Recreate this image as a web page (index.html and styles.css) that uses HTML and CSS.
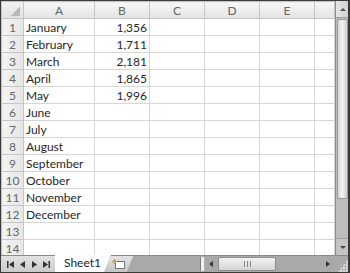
FILE: index.html
```html
<!DOCTYPE html>
<html lang="en">
<head>
    <meta charset="UTF-8">
    <title>Book1</title>
    <link rel="stylesheet" href="styles.css">
</head>
<body>
    <div class="workbook">
        <div class="sheet-area">
            <table class="grid">
                <colgroup>
                    <col class="col-row">
                    <col class="col-a">
                    <col class="col-std">
                    <col class="col-std">
                    <col class="col-std">
                    <col class="col-std">
                    <col>
                </colgroup>
                <thead>
                    <tr>
                        <th class="corner"></th>
                        <th>A</th>
                        <th>B</th>
                        <th>C</th>
                        <th>D</th>
                        <th>E</th>
                        <th></th>
                    </tr>
                </thead>
                <tbody id="rows">
                    <!-- rows are filled in by the script below -->
                </tbody>
            </table>
            <div class="vscroll">
                <div class="sb-btn"><span class="tri-up"></span></div>
                <div class="vthumb"></div>
                <div class="vtrack"></div>
                <div class="sb-btn"><span class="tri-down"></span></div>
            </div>
        </div>

        <div class="tabbar">
            <div class="tab-nav">
                <svg width="8" height="7" viewBox="0 0 8 7"><rect x="0" y="0" width="1.5" height="7" fill="#333"/><polygon points="7,0 2,3.5 7,7" fill="#333"/></svg>
                <svg width="6" height="7" viewBox="0 0 6 7"><polygon points="5,0 0,3.5 5,7" fill="#333"/></svg>
                <svg width="6" height="7" viewBox="0 0 6 7"><polygon points="1,0 6,3.5 1,7" fill="#333"/></svg>
                <svg width="8" height="7" viewBox="0 0 8 7"><polygon points="1,0 6,3.5 1,7" fill="#333"/><rect x="6.5" y="0" width="1.5" height="7" fill="#333"/></svg>
            </div>
            <div class="tab">Sheet1</div>
            <div class="new-tab">
                <svg width="14" height="10" viewBox="0 0 14 10"><rect x="3.5" y="2.5" width="9" height="7" fill="#fff" stroke="#777"/><path d="M1 1 L4 4 M4 1 L1 4 M2.5 0 V5 M0 2.5 H5" stroke="#c9a640" stroke-width="1"/></svg>
            </div>
            <div class="tab-fill"></div>
            <div class="split"></div>
            <div class="hscroll">
                <div class="hs-btn"><span class="tri-left"></span></div>
                <div class="hthumb"><span class="grip"></span></div>
                <div class="htrack"></div>
                <div class="hs-btn"><span class="tri-right"></span></div>
            </div>
            <div class="size-grip"></div>
        </div>
    </div>

    <script>
        // Sheet data: month in A, sales in B
        const months = ["January", "February", "March", "April", "May", "June",
            "July", "August", "September", "October", "November", "December"];
        const sales = ["1,356", "1,711", "2,181", "1,865", "1,996"];

        const body = document.getElementById('rows');
        for (let i = 0; i < 14; i++) {
            const row = document.createElement('tr');
            row.innerHTML = `
                <td class="row-head">${i + 1}</td>
                <td>${months[i] || ''}</td>
                <td class="num">${sales[i] || ''}</td>
                <td></td>
                <td></td>
                <td></td>
                <td></td>
            `;
            body.appendChild(row);
        }
    </script>
</body>
</html>
```

FILE: styles.css
```css
body {
    margin: 0;
    font-family: Lato, "Liberation Sans", sans-serif;
}

.workbook {
    width: 350px;
    height: 273px;
    box-sizing: border-box;
    border: 1px solid #3a3a3a;
    border-right-width: 2px;
    background-color: #fff;
    display: flex;
    flex-direction: column;
    overflow: hidden;
}

.sheet-area {
    display: flex;
    height: 255px;
    overflow: hidden;
}

.grid {
    border-collapse: collapse;
    table-layout: fixed;
    width: 334px;
    flex: none;
}

.col-row { width: 22px; }
.col-a { width: 71px; }
.col-std { width: 55px; }

.grid th,
.grid td {
    height: 17px;
    padding: 0 2px;
    border: 1px solid #d6d6d6;
    font-size: 12px;
    line-height: 15px;
    color: #262626;
    white-space: nowrap;
    overflow: hidden;
    box-sizing: border-box;
}

.grid th {
    background: linear-gradient(#f7f7f7, #e3e3e3);
    border-color: #c6c6c6;
    color: #666;
    font-weight: normal;
    text-align: center;
}

.grid td.row-head {
    background: linear-gradient(to right, #f4f4f4, #e6e6e6);
    border-color: #c6c6c6;
    color: #666;
    text-align: center;
    padding: 0;
}

.grid th.corner {
    background:
        linear-gradient(to top left, #b9b9b9 50%, transparent 50%) right 3px bottom 2px / 9px 9px no-repeat,
        linear-gradient(#f2f2f2, #e2e2e2);
}

.grid td.num {
    text-align: right;
    padding-right: 2px;
}

/* vertical scroll bar */
.vscroll {
    width: 13px;
    flex: none;
    display: flex;
    flex-direction: column;
    background-color: #bdbdbd;
    border-left: 1px solid #8d8d8d;
}

.sb-btn {
    height: 16px;
    display: flex;
    align-items: center;
    justify-content: center;
    background: linear-gradient(to right, #e6e6e6, #cfcfcf);
    border-bottom: 1px solid #a0a0a0;
}

.sb-btn:last-child {
    border-bottom: none;
    border-top: 1px solid #a0a0a0;
    background: #c4c4c4;
}

.tri-up {
    border-left: 3px solid transparent;
    border-right: 3px solid transparent;
    border-bottom: 3px solid #555;
}

.tri-down {
    border-left: 3px solid transparent;
    border-right: 3px solid transparent;
    border-top: 3px solid #444;
}

.vthumb {
    height: 178px;
    margin: 1px 1px 0;
    background: linear-gradient(to right, #d6d6d6, #f4f4f4 45%, #d0d0d0);
    border: 1px solid #9a9a9a;
    border-radius: 2px;
}

.vtrack {
    flex: 1;
}

/* sheet tabs and horizontal scroll bar */
.tabbar {
    height: 16px;
    display: flex;
    align-items: stretch;
    background-color: #a9a9a9;
    border-top: 1px solid #8a8a8a;
}

.tab-nav {
    width: 54px;
    display: flex;
    align-items: center;
    justify-content: space-around;
    padding: 0 3px;
    box-sizing: border-box;
    background: linear-gradient(#e2e2e2, #cacaca);
}

.tab {
    width: 56px;
    margin-top: -1px;
    padding-left: 9px;
    box-sizing: border-box;
    background-color: #fff;
    font-size: 12px;
    line-height: 16px;
    color: #222;
    clip-path: polygon(0 0, 100% 0, 88% 100%, 0 100%);
}

.new-tab {
    width: 28px;
    margin-left: -6px;
    display: flex;
    align-items: center;
    justify-content: center;
    background: linear-gradient(#e4e4e4, #c6c6c6);
    clip-path: polygon(20% 0, 100% 0, 78% 100%, 0 100%);
}

.tab-fill {
    flex: 1;
}

.split {
    width: 3px;
    margin: 1px 0;
    background-color: #f0f0f0;
    border-left: 1px solid #7a7a7a;
}

.hscroll {
    width: 131px;
    display: flex;
    align-items: stretch;
    background-color: #a9a9a9;
}

.hs-btn {
    width: 14px;
    display: flex;
    align-items: center;
    justify-content: center;
}

.tri-left {
    border-top: 3px solid transparent;
    border-bottom: 3px solid transparent;
    border-right: 4px solid #333;
}

.tri-right {
    border-top: 3px solid transparent;
    border-bottom: 3px solid transparent;
    border-left: 4px solid #333;
}

.hthumb {
    width: 56px;
    margin: 1px 0;
    display: flex;
    align-items: center;
    justify-content: center;
    background: linear-gradient(#f2f2f2, #d4d4d4);
    border: 1px solid #8f8f8f;
    border-radius: 2px;
}

.grip {
    width: 5px;
    height: 6px;
    border-left: 1px solid #888;
    border-right: 1px solid #888;
    background: linear-gradient(to right, transparent 2px, #888 2px, #888 3px, transparent 3px);
}

.htrack {
    flex: 1;
}

.size-grip {
    width: 13px;
    background:
        radial-gradient(circle, #777 0.8px, transparent 1px) 0 0 / 3px 3px,
        #cfcfcf;
    clip-path: polygon(100% 20%, 100% 100%, 20% 100%);
}
```
